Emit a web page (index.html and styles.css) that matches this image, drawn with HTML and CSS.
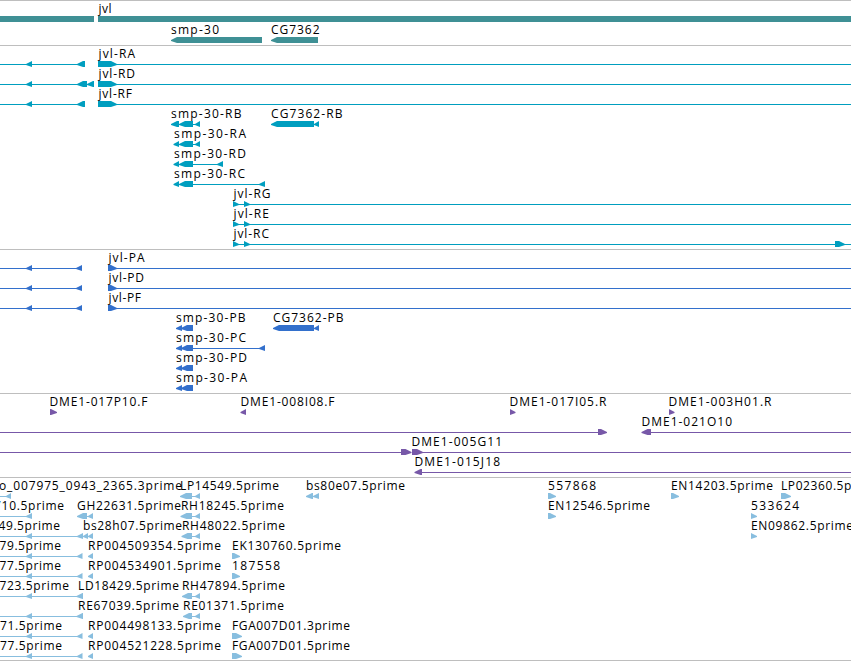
FILE: index.html
```
<!DOCTYPE html>
<html lang="en">
<head>
  <meta charset="UTF-8">
  <meta name="viewport" content="width=device-width, initial-scale=1.0">
  <title>jvl region</title>
  <link rel="stylesheet" href="styles.css">
</head>
<body>
  <main class="browser">
    <section class="track genes" id="genes"></section>
    <section class="track transcripts" id="transcripts"></section>
    <section class="track proteins" id="proteins"></section>
    <section class="track clones" id="clones"></section>
    <section class="track ests" id="ests"></section>
  </main>

  <script src="tracks.js"></script>
</body>
</html>
```

FILE: styles.css
```
body {
  margin: 0;
  background-color: #fff;
  color: #000;
  font-family: "Open Sans", "Noto Sans", sans-serif;
  overflow: hidden;
}

.browser {
  display: flex;
  flex-direction: column;
  width: 851px;
  border-bottom: 1px solid #bebebe;
}

.track {
  display: flex;
  flex-direction: column;
  border-top: 1px solid #bebebe;
  padding-bottom: 3px;
}

/* Bars reach 1px below their row */
.row {
  display: block;
  width: 851px;
  height: 20px;
  overflow: visible;
}

.label {
  font-size: 12px;
  fill: #000;
}

.line {
  shape-rendering: crispEdges;
}

/* Track colors */
.genes {
  fill: #3f9095;
  row-gap: 1px;
}

.transcripts {
  fill: #009ebf;
}

.proteins {
  fill: #3370cc;
}

.clones {
  fill: #7758a8;
}

.ests {
  fill: #88bedf;
  padding-bottom: 2px;
}
```

FILE: tracks.js
```
// labels: [text, start, end]
// lines: [start, end]
// parts: [direction, start, end], "=" is a plain bar
const LEFT = [["<", 26, 32], ["<", 77, 85]];
const LEFT_P = [["<", 26, 32], ["<", 76, 82]];
const LEFT_E = [["<", 26, 32], ["<", 77, 82.5], ["<", 88, 93]];
const JVL = [[">", 98, 117]];
const SMP = [["<", 173.5, 179], ["<", 179, 193]];
const SMP_P = [["<", 176, 182], ["<", 181, 193]];

const tracks = {
  genes: [
    { labels: [["jvl", 98.5, 111.5]], lines: [], parts: [["=", 0, 94], ["=", 98, 851]] },
    { labels: [["smp-30", 171, 219], ["CG7362", 271, 319.5]], lines: [], parts: [["<", 171, 262], ["<", 271, 318]] }
  ],
  transcripts: [
    { labels: [["jvl-RA", 98.5, 135]], lines: [[0, 78], [110, 851]], parts: [...LEFT, ...JVL] },
    { labels: [["jvl-RD", 98.5, 135]], lines: [[0, 78], [110, 851]], parts: [["<", 26, 32], ["<", 77, 87], ["<", 87, 94], ...JVL] },
    { labels: [["jvl-RF", 98.5, 132]], lines: [[0, 78], [110, 851]], parts: [...LEFT, ...JVL] },
    { labels: [["smp-30-RB", 171, 241.5], ["CG7362-RB", 271, 342.5]], lines: [[193, 196]], parts: [["<", 171, 179], ["<", 179, 193], ["<", 195, 200], ["<", 271, 314], ["<", 314, 319]] },
    { labels: [["smp-30-RA", 174, 246]], lines: [[193, 196]], parts: [...SMP, ["<", 195, 200]] },
    { labels: [["smp-30-RD", 174, 246]], lines: [[193, 218]], parts: [...SMP, ["<", 217, 223]] },
    { labels: [["smp-30-RC", 174, 245]], lines: [[193, 260]], parts: [...SMP, ["<", 259, 265]] },
    { labels: [["jvl-RG", 233.5, 270.5]], lines: [[233, 851]], parts: [[">", 233, 239], [">", 244, 250]] },
    { labels: [["jvl-RE", 233.5, 269]], lines: [[233, 851]], parts: [[">", 233, 239], [">", 244, 250]] },
    { labels: [["jvl-RC", 233.5, 269]], lines: [[233, 851]], parts: [[">", 233, 239], [">", 244, 250], [">", 835, 845]] }
  ],
  proteins: [
    { labels: [["jvl-PA", 108.5, 144.5]], lines: [[0, 77], [112, 851]], parts: [...LEFT_P, [">", 108, 117]] },
    { labels: [["jvl-PD", 108.5, 144]], lines: [[0, 77], [112, 851]], parts: [...LEFT_P, [">", 108, 117]] },
    { labels: [["jvl-PF", 108.5, 141]], lines: [[0, 77], [112, 851]], parts: [...LEFT_P, [">", 108, 117]] },
    { labels: [["smp-30-PB", 176, 245.5], ["CG7362-PB", 273, 343.5]], lines: [], parts: [...SMP_P, ["<", 273, 314], ["<", 314, 319]] },
    { labels: [["smp-30-PC", 176, 246]], lines: [[193, 260]], parts: [...SMP_P, ["<", 259, 265]] },
    { labels: [["smp-30-PD", 176, 247]], lines: [], parts: SMP_P },
    { labels: [["smp-30-PA", 176, 247]], lines: [], parts: SMP_P }
  ],
  clones: [
    {
      labels: [["DME1-017P10.F", 49.5, 147.5], ["DME1-008I08.F", 240.5, 334.5], ["DME1-017I05.R", 509.5, 606.5], ["DME1-003H01.R", 668.5, 771.5]],
      lines: [],
      parts: [[">", 50, 57], ["<", 240.5, 246], [">", 510, 515.5], [">", 669, 674.5]]
    },
    { labels: [["DME1-021O10", 641.5, 732]], lines: [[0, 599], [650, 851]], parts: [[">", 598, 607], ["<", 641.5, 651]] },
    { labels: [["DME1-005G11", 411.5, 502]], lines: [[0, 402], [418, 851]], parts: [[">", 401, 411.5], [">", 412, 423]] },
    { labels: [["DME1-015J18", 414.5, 500]], lines: [[421, 851]], parts: [["<", 414.5, 422]] }
  ],
  ests: [
    {
      labels: [["o_007975_0943_2365.3prime", -1, 182], ["LP14549.5prime", 180, 279], ["bs80e07.5prime", 306, 405], ["557868", 548, 596], ["EN14203.5prime", 671, 773], ["LP02360.5prime", 781, 879.5]],
      lines: [[0, 7], [192, 196]],
      parts: [["<", 6, 11], ["<", 180, 192], ["<", 195, 200], ["<", 306, 313], ["<", 313, 319], [">", 548, 556], [">", 671, 679], [">", 781, 791]]
    },
    {
      labels: [["710.5prime", -6, 64], ["GH22631.5prime", 77, 181], ["RH18245.5prime", 181, 284], ["EN12546.5prime", 548, 650], ["533624", 751, 799]],
      lines: [[0, 27], [86, 89], [192, 196]],
      parts: [["<", 26, 32], ["<", 77, 87], ["<", 88, 93], ["<", 180.5, 192], ["<", 195, 200], [">", 548, 556], [">", 751, 757]]
    },
    {
      labels: [["49.5prime", -1.5, 60], ["bs28h07.5prime", 83, 182], ["RH48022.5prime", 182, 285], ["EN09862.5prime", 751, 853]],
      lines: [[0, 78], [192, 196]],
      parts: [["<", 26, 32], ["<", 77, 83], ["<", 83, 88], ["<", 88, 93], ["<", 181.5, 192], ["<", 195, 200], [">", 751, 757]]
    },
    { labels: [["79.5prime", -0.5, 61], ["RP004509354.5prime", 88, 221], ["EK130760.5prime", 232, 341]], lines: [[0, 78]], parts: [...LEFT_E, [">", 232, 240]] },
    { labels: [["77.5prime", -0.5, 61], ["RP004534901.5prime", 88, 221], ["187558", 232, 280]], lines: [[0, 78]], parts: [...LEFT_E, [">", 232, 240]] },
    { labels: [["723.5prime", -0.5, 69], ["LD18429.5prime", 78, 179], ["RH47894.5prime", 182, 285]], lines: [[0, 78], [192, 196]], parts: [["<", 26, 32], ["<", 76.5, 83], ["<", 182, 192], ["<", 195, 200]] },
    { labels: [["RE67039.5prime", 78, 179], ["RE01371.5prime", 183, 284]], lines: [[0, 78], [192, 196]], parts: [["<", 26, 32], ["<", 76.5, 83], ["<", 183, 192], ["<", 195, 200]] },
    { labels: [["71.5prime", 0, 62], ["RP004498133.5prime", 88, 221], ["FGA007D01.3prime", 232, 350]], lines: [[0, 78]], parts: [...LEFT_E, [">", 232, 242]] },
    { labels: [["77.5prime", 0, 62], ["RP004521228.5prime", 88, 221], ["FGA007D01.5prime", 232, 350]], lines: [[0, 78]], parts: [...LEFT_E, [">", 232, 242]] }
  ]
};

const SVG = "http://www.w3.org/2000/svg";

function add(parent, name, attrs) {
  const el = document.createElementNS(SVG, name);
  for (const key in attrs) {
    el.setAttribute(key, attrs[key]);
  }
  parent.appendChild(el);
  return el;
}

// Bars are 6px tall, arrow heads take up to 6px of the length
function partPoints(dir, start, end) {
  const head = Math.min(6, end - start);
  if (dir === ">") {
    return `${start},15 ${end - head},15 ${end},18 ${end},19 ${end - head},21 ${start},21`;
  }
  if (dir === "<") {
    return `${end},15 ${start + head},15 ${start},18 ${start},19 ${start + head},21 ${end},21`;
  }
  return `${start},15 ${end},15 ${end},21 ${start},21`;
}

for (const id in tracks) {
  const track = document.getElementById(id);
  tracks[id].forEach(row => {
    const svg = add(track, "svg", { class: "row" });
    row.lines.forEach(([start, end]) => {
      add(svg, "rect", { class: "line", x: start, y: 18, width: end - start, height: 1 });
    });
    row.parts.forEach(([dir, start, end]) => {
      add(svg, "polygon", { points: partPoints(dir, start, end) });
    });
    row.labels.forEach(([text, start, end]) => {
      const label = add(svg, "text", { class: "label", x: start, y: 12, textLength: end - start });
      label.textContent = text;
    });
  });
}
```
